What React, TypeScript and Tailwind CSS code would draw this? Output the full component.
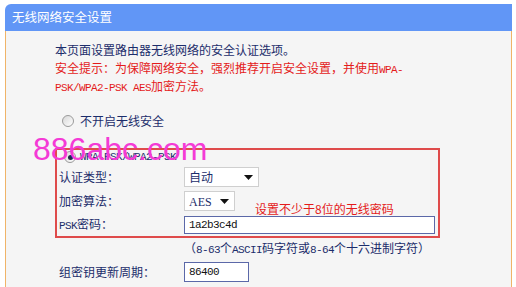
import React from "react";

const cjk = "font-['Noto_Sans_CJK_SC','Noto_Sans',sans-serif]";

// half-width latin text, like the router page's bitmap font
const L: React.FC<{ children: React.ReactNode }> = ({ children }) => (
  <span className="font-['Liberation_Mono',monospace] text-[11px] tracking-[-0.6px]">{children}</span>
);

const Radio: React.FC<{ checked?: boolean }> = ({ checked }) => (
  <div className="w-[12px] h-[12px] rounded-full border border-[#9a9a9a] bg-gradient-to-br from-[#d8d8d8] to-[#ffffff] flex items-center justify-center">
    {checked && <div className="w-[5px] h-[5px] rounded-full bg-[#1f2a44]" />}
  </div>
);

const Arrow = () => (
  <svg width="9" height="5" viewBox="0 0 9 5">
    <path d="M0 0 L9 0 L4.5 5 Z" fill="#111" />
  </svg>
);

const Select: React.FC<{ value: React.ReactNode; width: string }> = ({ value, width }) => (
  <div className={`${width} h-[20px] bg-white border border-[#cfcfcf] flex items-center justify-between pl-[4px] pr-[5px]`}>
    <span>{value}</span>
    <Arrow />
  </div>
);

export default function App() {
  return (
    <div className={`relative w-[516px] h-[287px] overflow-hidden bg-white pt-[4px] pl-[5px] text-[12px] ${cjk}`}>
      <div className="w-[507px] h-[283px] rounded-tl-[6px] overflow-hidden flex flex-col">
        <div className="h-[27px] bg-[#6196f6] text-white text-[12.5px] flex items-center pl-[7px]">无线网络安全设置</div>
        <div className="flex-1 bg-[#f5f5f5] border-x border-[#f0b468] pl-[49px] pt-[10px] text-[#1c2d6b]">
          <div className="h-[18px] leading-[18px]">本页面设置路由器无线网络的安全认证选项。</div>
          <div className="h-[18px] leading-[18px] text-[#e41b1b]">
            安全提示：为保障网络安全，强烈推荐开启安全设置，并使用<L>WPA-</L>
          </div>
          <div className="h-[18px] leading-[18px] text-[#e41b1b]">
            <L>PSK/WPA2-PSK AES</L>加密方法。
          </div>

          <div className="mt-[17px] h-[18px] flex items-center pl-[7px] gap-[6px]">
            <Radio />
            <span className="text-[#1c2d6b]">不开启无线安全</span>
          </div>

          <div className="mt-[18px] w-[385px] border-2 border-[#df4b4b] pl-[2px] pb-[1px]">
            <div className="h-[14px] flex items-center pl-[5px] gap-[4px]">
              <Radio checked />
              <L>WPA-PSK/WPA2-PSK</L>
            </div>
            <div className="mt-[3px] h-[20px] flex items-center">
              <div className="w-[125px]">认证类型：</div>
              <Select value="自动" width="w-[75px]" />
            </div>
            <div className="mt-[4px] h-[20px] flex items-center">
              <div className="w-[125px]">加密算法：</div>
              <Select value={<span className="font-['Liberation_Serif',serif] text-[12px]">AES</span>} width="w-[51px]" />
              <span className="ml-[20px] mt-[16px] text-[#e41b1b] whitespace-nowrap">设置不少于8位的无线密码</span>
            </div>
            <div className="mt-[4px] h-[20px] flex items-center">
              <div className="w-[125px]">
                <L>PSK</L>密码：
              </div>
              <div className="w-[251px] h-[18px] bg-white border border-[#5b68a8] flex items-center pl-[4px] text-[#111]">
                <L>1a2b3c4d</L>
              </div>
            </div>
          </div>

          <div className="mt-[1px] h-[18px] leading-[18px] pl-[129px] whitespace-nowrap">
            （<L>8-63</L>个<L>ASCII</L>码字符或<L>8-64</L>个十六进制字符）
          </div>

          <div className="mt-[5px] h-[20px] flex items-center pl-[4px]">
            <div className="w-[125px]">组密钥更新周期：</div>
            <div className="w-[65px] h-[20px] bg-white border border-[#5b68a8] flex items-center pl-[4px] text-[#111]">
              <L>86400</L>
            </div>
          </div>
        </div>
      </div>

      {/* watermark over the page */}
      <div className="absolute left-[33px] top-[133px] leading-none text-[32px] text-[#f43ad6] font-['Liberation_Sans',Arial,sans-serif] pointer-events-none">
        886abc.com
      </div>
    </div>
  );
}
